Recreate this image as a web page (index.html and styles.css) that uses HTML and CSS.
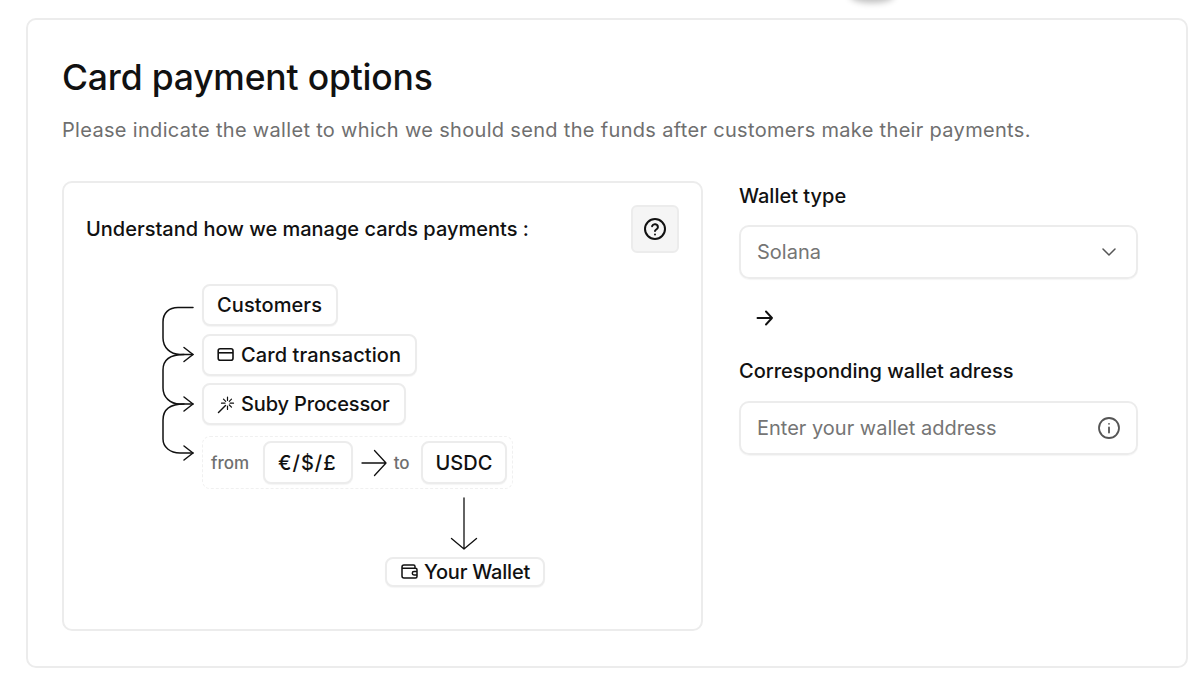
FILE: index.html
```html
<!DOCTYPE html>
<html lang="en">
<head>
<meta charset="utf-8">
<title>Card payment options</title>
<link rel="stylesheet" href="styles.css">
</head>
<body>
<div class="blob"></div>
<section class="card">
  <h1 class="title">Card payment options</h1>
  <p class="subtitle">Please indicate the wallet to which we should send the funds after customers make their payments.</p>
  <div class="columns">
    <div class="panel">
      <div class="panel-head">
        <span class="panel-title">Understand how we manage cards payments :</span>
        <button class="help" type="button" aria-label="Help">
          <svg width="24" height="24" viewBox="0 0 24 24" fill="none" stroke="#111" stroke-width="2" stroke-linecap="round" stroke-linejoin="round"><circle cx="12" cy="12" r="10"/><path d="M9.100 9.200a3 3 0 0 1 5.800 1c0 2-2.900 2.400-2.900 3.800"/><path d="M12 17.400h.01"/></svg>
        </button>
      </div>
      <div class="diagram">
        <svg class="connector" width="36" height="160" viewBox="0 0 36 160" fill="none" stroke="#111" stroke-width="1.500" stroke-linecap="round" stroke-linejoin="round">
          <path d="M31 7.500H16C7 7.500 1 13 1 22V38C1 47 8 54.500 18 54.500H31"/>
          <path d="M22 54.500C8 54.500 1 60 1 70V88C1 97 8 104 18 104H31"/>
          <path d="M22 104C8 104 1 110 1 120V139C1 147 8 153 18 153H31"/>
          <path d="M22 47.500L31 54.500L22 61.500"/>
          <path d="M22 97L31 104L22 111"/>
          <path d="M22 146L31 153L22 160"/>
        </svg>
        <div class="flow">
          <div class="chip spaced">Customers</div>
          <div class="chip spaced">
            <svg class="chip-icon" viewBox="0 0 19 19" fill="none" stroke="#111" stroke-width="1.600"><rect x="1.200" y="3.800" width="14.800" height="11.400" rx="2"/><path d="M1.200 7.800h14.800"/></svg>
            Card transaction
          </div>
          <div class="chip tight">
            <svg class="chip-icon" viewBox="0 0 19 19" fill="none" stroke="#111" stroke-width="1.200" stroke-linecap="round"><path d="M1.500 17.500L8.500 10.500" stroke-width="1.500"/><path d="M10.500 2v3.500M10.500 11v3.500M4.500 8.200H8M13 8.200h3.500M6.500 4.200l2.200 2.200M14.500 4.200l-2.200 2.200M14.500 12.200L12.300 10"/></svg>
            Suby Processor
          </div>
          <div class="convert">
            <span class="muted first">from</span>
            <div class="chip tall wide">€/$/£</div>
            <svg class="arrow-right" width="26" height="28" viewBox="0 0 26 28" fill="none" stroke="#111" stroke-width="1.300" stroke-linecap="round" stroke-linejoin="round"><path d="M1 14H25M13.500 1.500L25 14L13.500 26.500"/></svg>
            <span class="muted">to</span>
            <div class="chip tall usdc">USDC</div>
          </div>
          <div class="down-wrap">
            <svg class="arrow-down" width="28" height="54" viewBox="0 0 28 54" fill="none" stroke="#111" stroke-width="1.300" stroke-linecap="round" stroke-linejoin="round"><path d="M14 1V52M1.500 41.500L14 52L26.500 41.500"/></svg>
            <div class="chip short">
              <svg class="chip-icon" viewBox="0 0 19 19" fill="none" stroke="#111" stroke-width="1.500" stroke-linejoin="round"><path d="M15 6.200V4.500a1.500 1.500 0 0 0-1.500-1.500H4a2 2 0 0 0-2 2v9a2 2 0 0 0 2 2h11.500a1.500 1.500 0 0 0 1.500-1.500V7.700a1.500 1.500 0 0 0-1.500-1.500H2"/><path d="M17 9.500h-3a1.700 1.700 0 0 0 0 3.400h3"/></svg>
              Your Wallet
            </div>
          </div>
        </div>
      </div>
    </div>
    <div class="form">
      <label class="label">Wallet type</label>
      <div class="field">
        <span>Solana</span>
        <svg class="chevron" width="16" height="16" viewBox="0 0 16 16" fill="none" stroke="#555" stroke-width="1.500" stroke-linecap="round" stroke-linejoin="round"><path d="M2 5l6 6 6-6"/></svg>
      </div>
      <div class="mini-arrow">
        <svg width="20" height="20" viewBox="0 0 20 20" fill="none" stroke="#111" stroke-width="1.900" stroke-linecap="round" stroke-linejoin="round"><path d="M2.500 10H17M11 3.500L17 10L11 16.500"/></svg>
      </div>
      <label class="label">Corresponding wallet adress</label>
      <div class="field">
        <span>Enter your wallet address</span>
        <svg width="24" height="24" viewBox="0 0 24 24" fill="none" stroke="#555" stroke-width="1.800" stroke-linecap="round"><circle cx="12" cy="12" r="10"/><path d="M12 11.500v5M12 7.800h.01"/></svg>
      </div>
    </div>
  </div>
</section>
</body>
</html>
```

FILE: styles.css
```css
* { box-sizing: border-box; }
html, body { margin: 0; height: 100%; overflow: hidden; background: #fff; }
body {
  padding: 18px 12px 0 26px;
  font-family: "Inter", "Liberation Sans", sans-serif;
  color: #111;
  position: relative;
}
.blob {
  position: absolute;
  left: 850px;
  top: -14px;
  width: 44px;
  height: 14px;
  border-radius: 50%;
  box-shadow: 0 3px 6px rgba(0, 0, 0, 0.25);
}
.card {
  height: 650px;
  border: 2px solid #ececec;
  border-radius: 10px;
  padding: 36px 48px 0 34px;
}
.title {
  margin: 0;
  font-size: 35.500px;
  line-height: 44px;
  font-weight: 500;
  letter-spacing: -0.2px;
}
.subtitle {
  margin: 16px 0 0;
  font-size: 20px;
  line-height: 28px;
  letter-spacing: 0.32px;
  color: #6f6f6f;
}
.columns {
  display: flex;
  gap: 36px;
  margin-top: 37px;
}
.panel {
  width: 641px;
  height: 450px;
  flex: none;
  border: 2px solid #ececec;
  border-radius: 10px;
  padding: 22px 22px 0;
}
.panel-head {
  display: flex;
  justify-content: space-between;
  align-items: center;
}
.panel-title { font-size: 20px; font-weight: 450; }
.help {
  width: 48px;
  height: 48px;
  padding: 0;
  display: flex;
  align-items: center;
  justify-content: center;
  background: #f5f5f5;
  border: 2px solid #ececec;
  border-radius: 6px;
}
.diagram {
  display: flex;
  align-items: flex-start;
  margin: 31px 0 0 76px;
}
.connector {
  flex: none;
  margin: 16px 4px 0 0;
  overflow: visible;
}
.flow {
  display: flex;
  flex-direction: column;
  align-items: flex-start;
  gap: 7.500px;
  flex: none;
}
.chip {
  height: 42px;
  padding: 0 13px;
  display: flex;
  align-items: center;
  gap: 5px;
  background: #fff;
  border: 2px solid #ececec;
  border-radius: 8px;
  box-shadow: 0 1px 1px rgba(0, 0, 0, 0.04);
  font-size: 20px;
  font-weight: 450;
  white-space: nowrap;
}
.spaced { letter-spacing: 0.1px; padding-right: 14px; }
.tight { letter-spacing: -0.15px; padding-right: 14px; }
.chip-icon { width: 19px; height: 19px; flex: none; }
.tall { height: 43px; }
.wide { letter-spacing: 1px; padding: 0 14px 0 13px; }
.short { height: 30px; letter-spacing: -0.2px; }
.usdc { margin-left: 11px; }
.convert {
  width: 311px;
  height: 53px;
  margin-top: 3.500px;
  display: flex;
  align-items: center;
  border: 1px dashed #f0f0f0;
  border-radius: 8px;
  padding-left: 8px;
}
.muted { font-size: 17px; font-weight: 500; color: #6f6f6f; }
.first { margin-right: 14px; }
.arrow-right { margin: 0 7px 0 8px; flex: none; }
.down-wrap {
  margin: 0 0 0 183px;
  display: flex;
  flex-direction: column;
  align-items: center;
  width: 160px;
  gap: 6px;
}
.arrow-down { margin-right: 2px; }
.form { width: 399px; flex: none; padding-top: 1px; }
.label { display: block; font-size: 20px; line-height: 28px; font-weight: 450; }
.field {
  height: 54px;
  margin-top: 15px;
  padding: 0 15px 0 16px;
  display: flex;
  align-items: center;
  justify-content: space-between;
  border: 2px solid #ececec;
  border-radius: 10px;
  box-shadow: 0 1px 1px rgba(0, 0, 0, 0.04);
  font-size: 20px;
  color: #757575;
}
.chevron { margin-right: 4px; }
.mini-arrow {
  height: 76px;
  padding: 2px 0 0 16px;
  display: flex;
  align-items: center;
}
.mini-arrow + .label { margin-top: 2px; }
.mini-arrow ~ .field { margin-top: 16px; }
```
